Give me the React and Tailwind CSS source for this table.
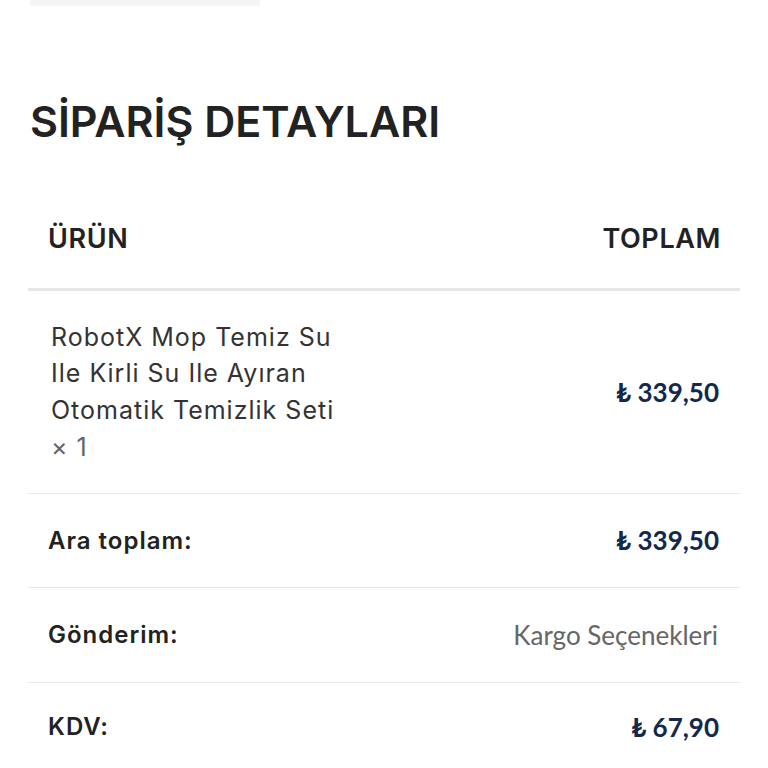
export default function App() {
  return (
    <div className="min-h-screen bg-white">
      <div className="h-[6px] w-[230px] ml-[30px] bg-[#f5f5f5]" />
      <div className="px-[28px]">
        <h2 className="mt-[94px] pl-[2px] text-[43px] font-semibold leading-none text-[#222] font-[Inter,sans-serif]">
          SİPARİŞ DETAYLARI
        </h2>

        <div className="mt-[55px]">
          <div className="flex h-[93px] items-center justify-between border-b-[3px] border-[#e6e6e6] pb-[8px] pl-[20px] pr-[19px] text-[27px] font-semibold tracking-[0.6px] text-[#222] font-[Inter,sans-serif]">
            <span>ÜRÜN</span>
            <span>TOPLAM</span>
          </div>

          <div className="flex h-[203px] items-center justify-between border-b border-[#e8e8e8] pl-[23px] pr-[21px]">
            <div className="text-[25px] leading-[36.7px] tracking-[1px] text-[#333] font-[Inter,sans-serif]">
              <span className="block">RobotX Mop Temiz Su</span>
              <span className="block">Ile Kirli Su Ile Ayıran</span>
              <span className="block">Otomatik Temizlik Seti</span>
              <span className="block text-[#666]">× 1</span>
            </div>
            <span className="text-[26px] font-bold text-[#13294b] font-[Lato,sans-serif]">₺ 339,50</span>
          </div>

          <div className="flex h-[94px] items-center justify-between border-b border-[#e8e8e8] pl-[20px] pr-[21px]">
            <span className="text-[24px] font-semibold tracking-[1px] text-[#222] font-[Inter,sans-serif]">Ara toplam:</span>
            <span className="text-[26px] font-bold text-[#13294b] font-[Lato,sans-serif]">₺ 339,50</span>
          </div>

          <div className="flex h-[95px] items-center justify-between border-b border-[#e8e8e8] pl-[20px] pr-[22px]">
            <span className="text-[24px] font-semibold tracking-[1px] text-[#222] font-[Inter,sans-serif]">Gönderim:</span>
            <span className="text-[26px] text-[#666] font-[Lato,sans-serif]">Kargo Seçenekleri</span>
          </div>

          <div className="flex h-[88px] items-center justify-between pl-[20px] pr-[21px]">
            <span className="text-[24px] font-semibold tracking-[1px] text-[#222] font-[Inter,sans-serif]">KDV:</span>
            <span className="text-[26px] font-bold text-[#13294b] font-[Lato,sans-serif]">₺ 67,90</span>
          </div>
        </div>
      </div>
    </div>
  );
}
